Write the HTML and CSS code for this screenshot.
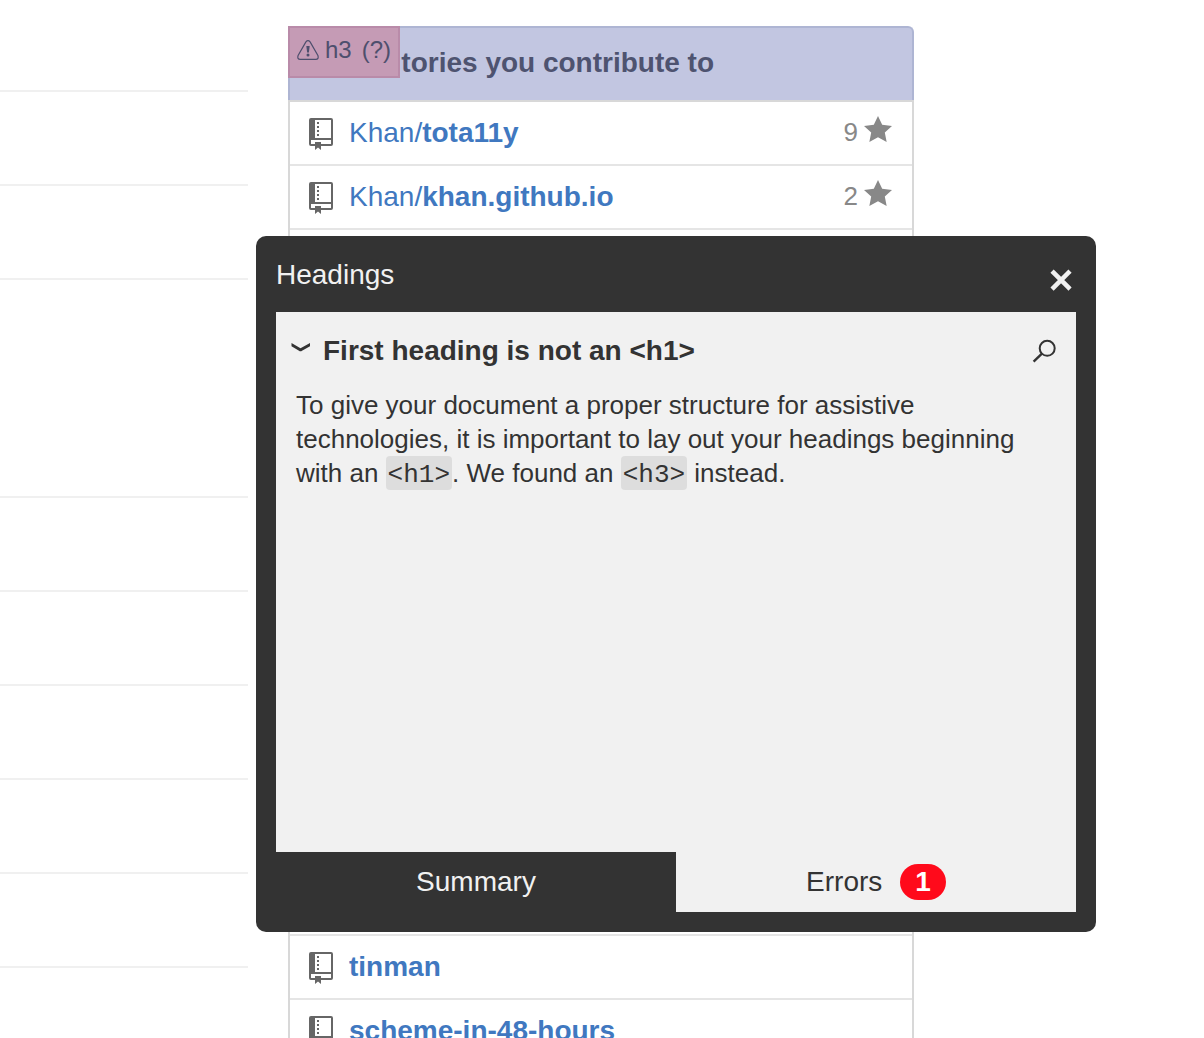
FILE: index.html
```
<!DOCTYPE html>
<html lang="en">
<head>
<meta charset="utf-8">
<meta name="viewport" content="width=device-width, initial-scale=1">
<title>Headings</title>
<link rel="stylesheet" href="styles.css">
</head>
<body>
<svg class="symbols" aria-hidden="true">
  <symbol id="icon-repo" viewBox="0 0 24 32">
    <path fill-rule="evenodd" d="M2 0H22Q24 0 24 2V26Q24 28 22 28H12V32L9 29.500L6 32V28H2Q0 28 0 26V2Q0 0 2 0ZM6 2V20H22V2ZM2 22V26H6V24H12V26H22V22Z"/>
    <path d="M8 4h2v2H8zM8 8h2v2H8zM8 12h2v2H8zM8 16h2v2H8z"/>
  </symbol>
  <symbol id="icon-star" viewBox="0 0 14 16">
    <path d="M14 6l-4.900-.64L7 1 4.900 5.360 0 6l3.600 3.260L2.670 14 7 11.670 11.330 14l-.93-4.740L14 6z"/>
  </symbol>
</svg>

<main class="page">
  <div class="feed">
    <div class="feed-item"></div>
    <div class="feed-item"></div>
    <div class="feed-item"></div>
    <div class="feed-item feed-item-tall"></div>
    <div class="feed-item"></div>
    <div class="feed-item"></div>
    <div class="feed-item"></div>
    <div class="feed-item"></div>
    <div class="feed-item"></div>
  </div>

  <section class="repos">
    <h3 class="repos-title">Repositories you contribute to</h3>
    <div class="heading-label">
      <svg class="warning-icon" viewBox="0 0 22 20" aria-hidden="true">
        <path d="M8.900 1.900Q11 -.6 13.100 1.900L20.900 15.500Q22 19.300 18.800 19.300H3.200Q0 19.300 1.100 15.500Z" fill="none" stroke="currentColor" stroke-width="1.200"/>
        <path d="M9.300 6h3.400l-.8 6.600h-1.800z" fill="currentColor"/>
        <circle cx="11" cy="15" r="1.500" fill="currentColor"/>
      </svg>
      <span>h3</span>
      <span>(?)</span>
    </div>
    <ul class="repo-list">
      <li class="repo">
        <svg class="repo-icon" aria-hidden="true"><use href="#icon-repo"/></svg>
        <a class="repo-link" href="#">Khan/<b>tota11y</b></a>
        <span class="stars">9 <svg class="star-icon" aria-hidden="true"><use href="#icon-star"/></svg></span>
      </li>
      <li class="repo">
        <svg class="repo-icon" aria-hidden="true"><use href="#icon-repo"/></svg>
        <a class="repo-link" href="#">Khan/<b>khan.github.io</b></a>
        <span class="stars">2 <svg class="star-icon" aria-hidden="true"><use href="#icon-star"/></svg></span>
      </li>
      <li class="repo-space"></li>
      <li class="repo">
        <svg class="repo-icon" aria-hidden="true"><use href="#icon-repo"/></svg>
        <a class="repo-link" href="#"><b>tinman</b></a>
      </li>
      <li class="repo">
        <svg class="repo-icon" aria-hidden="true"><use href="#icon-repo"/></svg>
        <a class="repo-link" href="#"><b>scheme-in-48-hours</b></a>
      </li>
    </ul>
  </section>
</main>

<section class="panel" role="dialog" aria-labelledby="panel-title">
  <header class="panel-header">
    <h2 class="panel-title" id="panel-title">Headings</h2>
    <button class="icon-button close-button" type="button" aria-label="Close">
      <svg width="24" height="24" viewBox="0 0 24 24" aria-hidden="true">
        <path d="M3.500 3.500L20.500 20.500M20.500 3.500L3.500 20.500" stroke="currentColor" stroke-width="5.200" stroke-linecap="square" transform="translate(1.600 1.600) scale(.87)"/>
      </svg>
    </button>
  </header>
  <div class="panel-body">
    <div class="error-header">
      <button class="icon-button" type="button" aria-label="Collapse">
        <svg width="20" height="18" viewBox="0 0 20 18" aria-hidden="true">
          <path d="M.5 1L9.500 6.200L19 1V4.200L11 8.800Q9.500 9.800 8 8.800L.5 4.200Z" fill="currentColor"/>
        </svg>
      </button>
      <h3 class="error-title">First heading is not an &lt;h1&gt;</h3>
      <button class="icon-button" type="button" aria-label="Show on page">
        <svg width="24" height="24" viewBox="0 0 24 24" aria-hidden="true">
          <circle cx="15.200" cy="9.300" r="7.500" fill="none" stroke="currentColor" stroke-width="2"/>
          <path d="M9.900 14.600L1.600 22.600" stroke="currentColor" stroke-width="2.400"/>
        </svg>
      </button>
    </div>
    <p class="error-text">To give your document a proper structure for assistive technologies, it is important to lay out your headings beginning with an <code>&lt;h1&gt;</code>. We found an <code>&lt;h3&gt;</code> instead.</p>
  </div>
  <div class="tabs" role="tablist">
    <button class="tab" type="button" role="tab" aria-selected="false">Summary</button>
    <button class="tab tab-active" type="button" role="tab" aria-selected="true">Errors <span class="badge">1</span></button>
  </div>
</section>
</body>
</html>
```
FILE: styles.css
```
* {
  box-sizing: border-box;
}

body {
  margin: 0;
  height: 100vh;
  overflow: hidden;
  background: #fff;
  color: #333;
  font-family: "Liberation Sans", Arial, sans-serif;
  font-size: 28px;
  line-height: 34px;
}

h2, h3, p, ul {
  margin: 0;
  padding: 0;
}

svg {
  display: block;
  flex: none;
}

.symbols {
  position: absolute;
  width: 0;
  height: 0;
}

.page {
  display: grid;
  grid-template-columns: 248px minmax(0, 1fr);
  column-gap: 40px;
  padding-right: 290px;
}

.feed-item {
  height: 94px;
  border-bottom: 2px solid #f0f0f0;
}

.feed-item:first-child {
  height: 92px;
}

.feed-item-tall {
  height: 218px;
}

.repos {
  position: relative;
  margin-top: 26px;
}

.repos-title {
  height: 74px;
  padding: 18px;
  border: 2px solid #aeb5d3;
  border-bottom: 0;
  border-radius: 6px 6px 0 0;
  background: #c2c6e1;
  color: #4e5370;
  font-size: 28px;
}

.heading-label {
  position: absolute;
  top: 0;
  left: 0;
  display: flex;
  gap: 6px;
  width: 112px;
  height: 52px;
  padding: 5px 7px;
  border: 2px solid #b98ba9;
  background: #c59bb5;
  color: #4e4f6d;
  font-size: 24px;
  white-space: nowrap;
}

.heading-label span + span {
  margin-left: 4px;
}

.warning-icon {
  width: 22px;
  height: 20px;
  margin-top: 7px;
}

.repo-list {
  border: 2px solid #d8d8d8;
  border-bottom: 0;
  list-style: none;
}

.repo {
  display: flex;
  align-items: center;
  height: 64px;
  padding: 0 20px 0 19px;
  border-bottom: 2px solid #e5e5e5;
}

.repo-space {
  height: 706px;
  border-bottom: 2px solid #e5e5e5;
}

.repo-icon {
  width: 24px;
  height: 32px;
  margin: 2px 16px 0 0;
  fill: #666;
}

.repo-link {
  color: #4078c0;
  text-decoration: none;
}

.stars {
  display: flex;
  gap: 6px;
  margin: 0 0 2px auto;
  color: #888;
  font-size: 26px;
}

.star-icon {
  width: 28px;
  height: 32px;
  margin-top: -1px;
  fill: currentColor;
}

.panel {
  position: absolute;
  top: 236px;
  right: 108px;
  width: 840px;
  padding: 0 20px 20px;
  border-radius: 10px;
  background: #333;
  color: #f1f1f1;
}

.panel-header {
  display: flex;
  justify-content: space-between;
  height: 76px;
  padding-top: 22px;
}

.panel-title {
  font-size: 28px;
  font-weight: 400;
}

.icon-button {
  display: block;
  padding: 0;
  border: 0;
  background: none;
  color: inherit;
}

.close-button {
  height: 24px;
  margin: 10px 3px 0 0;
}

.panel-body {
  min-height: 540px;
  padding: 20px;
  background: #f1f1f1;
  color: #333;
}

.error-header {
  display: flex;
  align-items: center;
  height: 38px;
  margin-left: -5px;
}

.error-title {
  margin: 0 auto 0 12px;
  font-size: 28px;
}

.error-text {
  margin-top: 18px;
  font-size: 26px;
}

.error-text code {
  padding: 4px 2px 0;
  border-radius: 4px;
  background: #ddd;
  font-family: "Liberation Mono", "Courier New", monospace;
  font-size: 26px;
}

.tabs {
  display: grid;
  grid-template-columns: 1fr 1fr;
}

.tab {
  display: flex;
  align-items: center;
  justify-content: center;
  gap: 18px;
  height: 60px;
  padding: 0;
  border: 0;
  background: #333;
  color: #f1f1f1;
  font: inherit;
}

.tab-active {
  background: #f1f1f1;
  color: #333;
}

.badge {
  padding: 0 15px;
  border-radius: 18px;
  background: #ff0a1b;
  color: #fff;
  font-weight: 700;
  line-height: 36px;
}
```
